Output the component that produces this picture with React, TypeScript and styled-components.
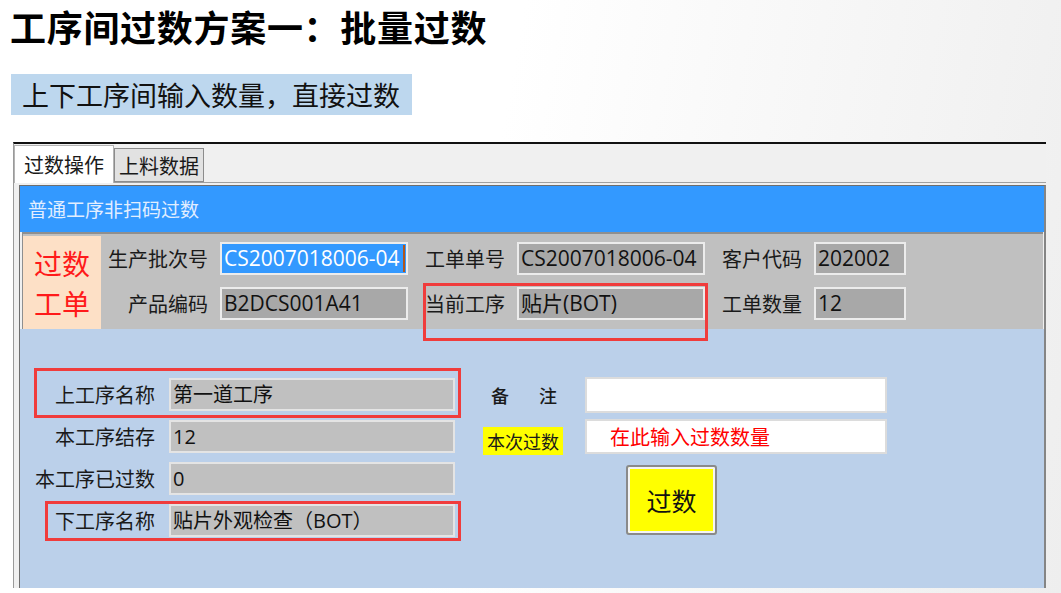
import React from 'react'
import styled, { createGlobalStyle } from 'styled-components'

const GlobalStyle = createGlobalStyle`
  html, body {
    margin: 0;
    padding: 0;
  }
  body {
    width: 1061px;
    height: 593px;
    overflow: hidden;
    background: linear-gradient(100deg, #ffffff 45%, #eeeeee 100%);
    font-family: 'Noto Sans CJK SC', sans-serif;
    color: #111;
  }
`

const Title = styled.h1`
  margin: 0;
  padding-left: 10px;
  font-size: 36px;
  line-height: 52px;
  font-weight: 700;
  letter-spacing: 0.7px;
  color: #000;
`

const Subtitle = styled.div`
  width: fit-content;
  margin: 22px 0 0 11px;
  padding: 0 12px 0 11px;
  height: 41px;
  line-height: 41px;
  background: #bdd7ee;
  font-size: 27px;
  color: #111;
`

const Window = styled.div`
  margin: 27px 0 0 13px;
  width: 1033px;
  height: 446px;
  box-sizing: border-box;
  border-top: 2px solid #111;
  border-left: 1px solid #9a9a9a;
  background: #f0f0f0;
  display: flex;
  flex-direction: column;
`

const TabStrip = styled.div`
  display: flex;
  align-items: flex-end;
  height: 38px;
  border-bottom: 1px solid #a0a0a0;
`

const Tab = styled.div<{ $active?: boolean }>`
  box-sizing: border-box;
  width: ${(p) => (p.$active ? 100 : 90)}px;
  height: ${(p) => (p.$active ? 38 : 34)}px;
  margin-bottom: ${(p) => (p.$active ? -1 : 0)}px;
  display: flex;
  align-items: center;
  justify-content: center;
  font-size: 20px;
  color: #1a1a1a;
  background: ${(p) => (p.$active ? '#ffffff' : '#e2e2e2')};
  border: 1px solid ${(p) => (p.$active ? '#b4b4b4' : '#8c8c8c')};
  border-bottom: ${(p) => (p.$active ? 'none' : '1px solid #8c8c8c')};
`

const Body = styled.div`
  flex: 1;
  display: flex;
  padding: 2px 0 0 5px;
`

const Panel = styled.div`
  flex: 1;
  display: flex;
  flex-direction: column;
  border-top: 1px solid #6e6e6e;
  border-left: 1px solid #6e6e6e;
  border-right: 2px solid #858585;
`

const Header = styled.div`
  height: 46px;
  line-height: 46px;
  padding-left: 8px;
  background: #3399ff;
  color: #e2eeff;
  font-size: 19px;
`

const Info = styled.div`
  position: relative;
  z-index: 1;
  display: flex;
  height: 97px;
  box-sizing: border-box;
  margin: 0 1px 0 2px;
  background: #c0c0c0;
  border-top: 2px solid #8f8f8f;
  border-left: 1px solid #8f8f8f;
`

const OrderTag = styled.div`
  width: 78px;
  margin-top: 2px;
  background: #fde0c6;
  color: #ff1a1a;
  font-size: 28px;
  line-height: 40px;
  display: flex;
  flex-direction: column;
  align-items: center;
  justify-content: center;
`

const FieldGrid = styled.div`
  display: grid;
  grid-template-columns: 107px 188px 85px 188px 85px 92px;
  grid-auto-rows: 33px;
  column-gap: 12px;
  row-gap: 12px;
  padding-top: 8px;
  align-items: center;
`

const Label = styled.div`
  text-align: right;
  font-size: 20px;
  color: #1a1a1a;
  white-space: nowrap;
`

const InfoInput = styled.div<{ $selected?: boolean }>`
  position: relative;
  height: 100%;
  box-sizing: border-box;
  border: 2px solid #ececec;
  background: ${(p) => (p.$selected ? '#3399ff' : '#a8a8a8')};
  color: ${(p) => (p.$selected ? '#ffffff' : '#111111')};
  font-family: 'Open Sans', 'Noto Sans CJK SC', sans-serif;
  font-size: 21px;
  line-height: 29px;
  padding-left: 2px;
  white-space: nowrap;
  overflow: hidden;
`

const Caret = styled.span`
  position: absolute;
  right: 1px;
  top: 1px;
  bottom: 1px;
  width: 2px;
  background: #b0561c;
`

const Highlight = styled.div<{ $top: number; $left: number; $right: number; $bottom: number }>`
  position: absolute;
  top: ${(p) => p.$top}px;
  left: ${(p) => p.$left}px;
  right: ${(p) => p.$right}px;
  bottom: ${(p) => p.$bottom}px;
  border: 3px solid #f03c3c;
  pointer-events: none;
`

const Lower = styled.div`
  flex: 1;
  display: flex;
  gap: 28px;
  padding: 48px 0 0 10px;
  background: #bbd0ea;
`

const LeftCol = styled.div`
  display: flex;
  flex-direction: column;
  gap: 9px;
  margin-top: 1px;
`

const Row = styled.div`
  position: relative;
  display: flex;
  align-items: center;
  gap: 14px;
  height: 33px;
`

const RowLabel = styled(Label)`
  width: 125px;
`

const GrayInput = styled.div`
  width: 286px;
  height: 100%;
  box-sizing: border-box;
  border: 2px solid #e4e4e4;
  background: #c0c0c0;
  font-family: 'Open Sans', 'Noto Sans CJK SC', sans-serif;
  font-size: 20px;
  line-height: 29px;
  padding-left: 2px;
  color: #111;
  white-space: nowrap;
`

const RightCol = styled.div`
  display: flex;
  flex-direction: column;
`

const RightGrid = styled.div`
  display: grid;
  grid-template-columns: 80px 302px;
  grid-template-rows: 36px 35px;
  column-gap: 22px;
  row-gap: 6px;
`

const RemarkLabel = styled.div`
  display: flex;
  align-items: center;
  justify-content: space-between;
  padding: 0 6px 0 8px;
  font-size: 18px;
  font-weight: 500;
  color: #1a1a1a;
`

const CountLabel = styled.div`
  align-self: end;
  margin-bottom: -1px;
  height: 28px;
  line-height: 28px;
  background: #ffff00;
  text-align: center;
  font-size: 18px;
  color: #1a1a1a;
`

const WhiteInput = styled.div`
  height: 100%;
  box-sizing: border-box;
  border: 2px solid #dcdcdc;
  background: #ffffff;
  padding-left: 23px;
  font-size: 20px;
  line-height: 31px;
  color: #ff0000;
`

const PassButton = styled.button`
  margin: 11px 0 0 143px;
  width: 91px;
  height: 70px;
  padding: 0;
  box-sizing: border-box;
  background: #ffff00;
  border: 2px solid #8a8a8a;
  border-radius: 3px;
  box-shadow: inset 0 0 0 2px #f4f4f4;
  font-family: 'Noto Sans CJK SC', sans-serif;
  font-size: 25px;
  color: #111;
`

const infoFields = [
  { label: '生产批次号', value: 'CS2007018006-04', selected: true },
  { label: '工单单号', value: 'CS2007018006-04' },
  { label: '客户代码', value: '202002' },
  { label: '产品编码', value: 'B2DCS001A41' },
  { label: '当前工序', value: '贴片(BOT)' },
  { label: '工单数量', value: '12' },
]

const processRows = [
  { label: '上工序名称', value: '第一道工序', box: { top: -10, left: 4, right: -6, bottom: -7 } },
  { label: '本工序结存', value: '12' },
  { label: '本工序已过数', value: '0' },
  { label: '下工序名称', value: '贴片外观检查（BOT）', box: { top: -3, left: 15, right: -6, bottom: -4 } },
]

const App: React.FC = () => {
  return (
    <>
      <GlobalStyle />
      <Title>工序间过数方案一：批量过数</Title>
      <Subtitle>上下工序间输入数量，直接过数</Subtitle>
      <Window>
        <TabStrip>
          <Tab $active>过数操作</Tab>
          <Tab>上料数据</Tab>
        </TabStrip>
        <Body>
          <Panel>
            <Header>普通工序非扫码过数</Header>
            <Info>
              <OrderTag>
                <span>过数</span>
                <span>工单</span>
              </OrderTag>
              <FieldGrid>
                {infoFields.map((f) => (
                  <React.Fragment key={f.label}>
                    <Label>{f.label}</Label>
                    <InfoInput $selected={f.selected}>
                      {f.value}
                      {f.selected && <Caret />}
                    </InfoInput>
                  </React.Fragment>
                ))}
              </FieldGrid>
              <Highlight $top={49} $left={400} $right={335} $bottom={-12} />
            </Info>
            <Lower>
              <LeftCol>
                {processRows.map((r) => (
                  <Row key={r.label}>
                    <RowLabel>{r.label}</RowLabel>
                    <GrayInput>{r.value}</GrayInput>
                    {r.box && (
                      <Highlight
                        $top={r.box.top}
                        $left={r.box.left}
                        $right={r.box.right}
                        $bottom={r.box.bottom}
                      />
                    )}
                  </Row>
                ))}
              </LeftCol>
              <RightCol>
                <RightGrid>
                  <RemarkLabel>
                    <span>备</span>
                    <span>注</span>
                  </RemarkLabel>
                  <WhiteInput />
                  <CountLabel>本次过数</CountLabel>
                  <WhiteInput>在此输入过数数量</WhiteInput>
                </RightGrid>
                <PassButton>过数</PassButton>
              </RightCol>
            </Lower>
          </Panel>
        </Body>
      </Window>
    </>
  )
}

export default App
